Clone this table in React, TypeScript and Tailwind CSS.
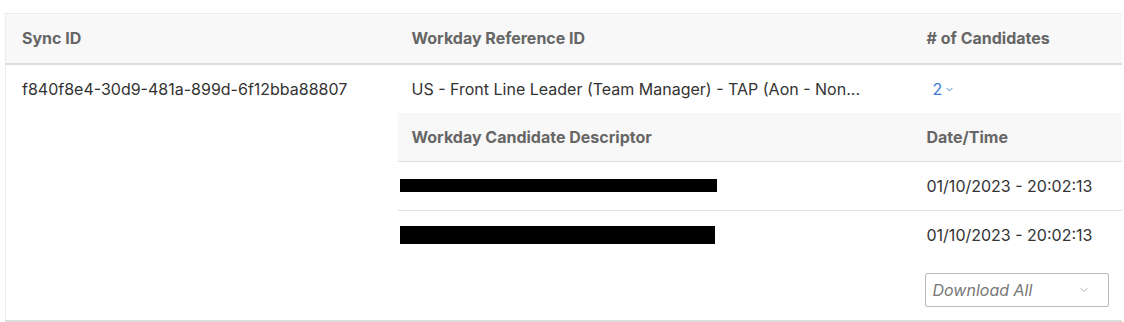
import { ChevronDown } from 'lucide-react'

const candidates = [
  { id: 1, redactW: 'w-[317px]', redactH: 'h-[13px]', date: '01/10/2023 - 20:02:13' },
  { id: 2, redactW: 'w-[315px]', redactH: 'h-[18px]', date: '01/10/2023 - 20:02:13' },
]

export default function App() {
  return (
    <div className="bg-white pt-[13px] pl-[5px] pr-[3px] h-[322px] font-['Inter','Noto_Sans',sans-serif] text-[16px]">
      <table className="w-[1116px] table-fixed border-collapse border-l border-t border-[#ececec]">
        <colgroup>
          <col className="w-[390px]" />
          <col className="w-[515px]" />
          <col className="w-[211px]" />
        </colgroup>
        <thead>
          <tr className="bg-[#f8f8f8] h-[50px] border-b-2 border-[#dddddd]">
            <th className="text-left pl-4 font-bold text-[#666]">Sync ID</th>
            <th className="text-left pl-4 font-bold text-[#666]">Workday Reference ID</th>
            <th className="text-left pl-4 font-bold text-[#666]"># of Candidates</th>
          </tr>
        </thead>
        <tbody>
          <tr className="border-b-2 border-[#dddddd] align-top">
            <td className="pl-4 pt-[12px] text-[#333]">f840f8e4-30d9-481a-899d-6f12bba88807</td>
            <td colSpan={2} className="p-0">
              <div className="flex h-[48px] items-center">
                <div className="w-[515px] pl-4 text-[#333] whitespace-nowrap">
                  US - Front Line Leader (Team Manager) - TAP (Aon - Non...
                </div>
                <button className="pl-[22px] flex items-center gap-[2px] text-[#3a7bd5]">
                  2<ChevronDown className="w-[11px] h-[11px] mt-[1px]" strokeWidth={2} />
                </button>
              </div>
              <div className="ml-[2px]">
                <div className="flex h-[49px] items-center bg-[#f8f8f8] border-b border-[#dddddd]">
                  <div className="w-[513px] pl-[14px] font-bold text-[#666]">Workday Candidate Descriptor</div>
                  <div className="pl-4 font-bold text-[#666]">Date/Time</div>
                </div>
                {candidates.map((c, i) => (
                  <div
                    key={c.id}
                    className={`flex h-[49px] items-center ${i === 0 ? 'border-b border-[#e3e3e3]' : ''}`}
                  >
                    <div className="w-[513px] pl-[2px]">
                      <div className={`${c.redactW} ${c.redactH} bg-black`} />
                    </div>
                    <div className="pl-4 text-[#333]">{c.date}</div>
                  </div>
                ))}
                <div className="flex h-[60px] items-start pt-[13px] pl-[527px]">
                  <div className="w-[184px] h-[34px] border border-[#bbbbbb] rounded-[2px] flex items-center justify-between pl-[7px] pr-[18px]">
                    <span className="italic text-[#777]">Download All</span>
                    <ChevronDown className="w-[12px] h-[12px] text-[#999]" strokeWidth={1.5} />
                  </div>
                </div>
              </div>
            </td>
          </tr>
        </tbody>
      </table>
    </div>
  )
}
